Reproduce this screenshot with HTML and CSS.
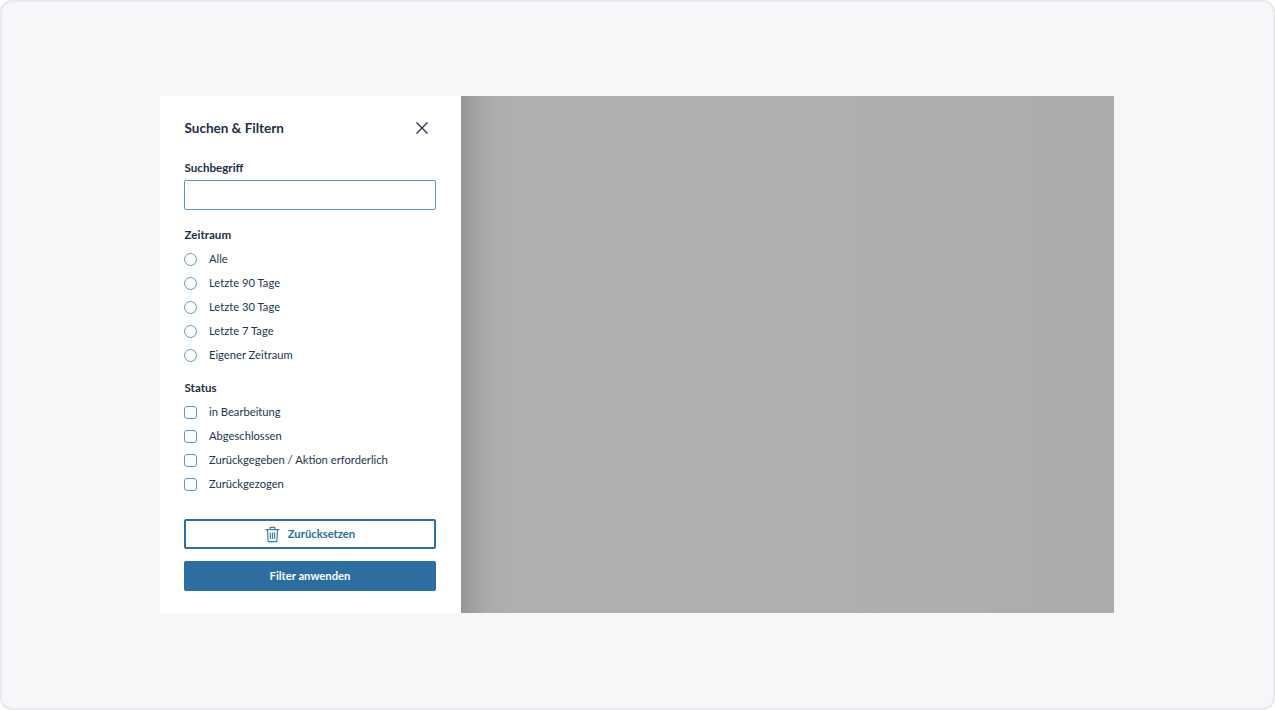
FILE: index.html
```html
<!DOCTYPE html>
<html lang="de">
<head>
  <meta charset="UTF-8" />
  <title>Suchen &amp; Filtern</title>
  <link rel="stylesheet" href="styles.css">
</head>
<body>
  <div class="frame">
    <div class="card">
      <aside class="panel">
        <div class="panel-head">
          <h2>Suchen &amp; Filtern</h2>
          <svg class="close" width="14" height="14" viewBox="0 0 14 14" fill="none" stroke="#1c2f48" stroke-width="1.2">
            <path d="M1.5 1.5 L12.5 12.5 M12.5 1.5 L1.5 12.5" />
          </svg>
        </div>

        <label class="group-label label-search" for="search">Suchbegriff</label>
        <input class="search" id="search" type="text" />

        <div class="group-label label-period">Zeitraum</div>
        <div class="option"><span class="radio"></span>Alle</div>
        <div class="option"><span class="radio"></span>Letzte 90 Tage</div>
        <div class="option"><span class="radio"></span>Letzte 30 Tage</div>
        <div class="option"><span class="radio"></span>Letzte 7 Tage</div>
        <div class="option"><span class="radio"></span>Eigener Zeitraum</div>

        <div class="group-label label-status">Status</div>
        <div class="option"><span class="check"></span>in Bearbeitung</div>
        <div class="option"><span class="check"></span>Abgeschlossen</div>
        <div class="option"><span class="check"></span>Zurückgegeben / Aktion erforderlich</div>
        <div class="option"><span class="check"></span>Zurückgezogen</div>

        <button class="btn btn-outline">
          <svg width="15" height="17" viewBox="0 0 15 17" fill="none" stroke="#3f7fac" stroke-width="1.2">
            <path d="M0.5 3.6 H14.5" />
            <path d="M5.2 3.6 V1.4 H9.8 V3.6" />
            <path d="M2.4 3.6 L3.2 15.6 H11.8 L12.6 3.6" />
            <path d="M5.4 6.5 V13 M7.5 6.5 V13 M9.6 6.5 V13" />
          </svg>
          <span class="btn-text">Zurücksetzen</span>
        </button>
        <button class="btn btn-primary"><span class="btn-text">Filter anwenden</span></button>
      </aside>
      <div class="backdrop"></div>
    </div>
  </div>
</body>
</html>
```

FILE: styles.css
```css
html,
body {
  height: 100%;
}

body {
  margin: 0;
  font-family: Lato, "Noto Sans", Arial, sans-serif;
  color: #1c2f48;
  background-color: #ffffff;
}

.frame {
  box-sizing: border-box;
  width: 1275px;
  height: 710px;
  padding: 94px 159px 95px 158px;
  background-color: #f6f7f9;
  border: 2px solid #e9eaed;
  border-radius: 12px;
}

.card {
  display: flex;
  height: 517px;
  background-color: #ffffff;
}

.panel {
  box-sizing: border-box;
  display: flex;
  flex-direction: column;
  width: 301px;
  padding: 23px 24px 22px 24px;
  background-color: #ffffff;
}

.panel-head {
  display: flex;
  justify-content: space-between;
  align-items: center;
  height: 18px;
  padding-right: 8px;
  width: 244px;
  padding-left: 0.5px;
}

.panel-head h2 {
  margin: 0;
  font-size: 13.5px;
  line-height: 18px;
  font-weight: 700;
}

.group-label {
  padding-left: 0.5px;
  font-size: 11.6px;
  line-height: 16px;
  font-weight: 700;
}

.label-search {
  margin-top: 23px;
}

.label-period {
  margin-top: 17px;
  margin-bottom: 3px;
}

.label-status {
  margin-top: 14px;
  margin-bottom: 3px;
}

.search {
  box-sizing: border-box;
  width: 252px;
  height: 30px;
  margin-top: 4px;
  border: 1px solid #5f96bb;
  border-radius: 2px;
  outline: none;
  background-color: #ffffff;
}

.option {
  display: flex;
  align-items: center;
  height: 24px;
  font-size: 11.2px;
  color: #24364e;
}

.radio,
.check {
  box-sizing: border-box;
  flex: none;
  width: 13px;
  height: 13px;
  margin-top: 2px;
  margin-right: 12px;
  border: 1px solid #5f96bb;
  background-color: #ffffff;
}

.radio {
  border-radius: 50%;
}

.check {
  border-radius: 3px;
}

.btn {
  box-sizing: border-box;
  display: flex;
  justify-content: center;
  align-items: center;
  gap: 8px;
  width: 252px;
  height: 30px;
  padding: 0;
  border-radius: 2px;
  font-family: inherit;
  font-size: 11.25px;
  font-weight: 700;
}

.btn-text {
  margin-bottom: 2px;
}

.btn-outline {
  margin-top: 24px;
  color: #2b6e9f;
  background-color: #ffffff;
  border: 2px solid #2b6e9f;
}

.btn-primary {
  margin-top: 12px;
  color: #ffffff;
  background-color: #2b6e9f;
  border: none;
}

.backdrop {
  flex: 1;
  background: linear-gradient(to right, #949598 0, #9c9d9f 8px, #a4a5a7 18px, #aaabad 30px, #aeafb1 46px, #aeafb1 60%, #abacad 100%);
}
```
